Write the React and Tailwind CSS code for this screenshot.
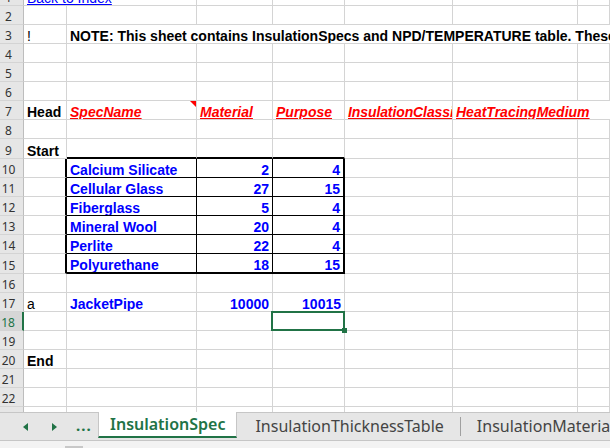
const FONT = { fontFamily: '"Liberation Sans", Arial, sans-serif' };
const UI_FONT = { fontFamily: '"Noto Sans", "Open Sans", sans-serif' };

const GRID = 'grid grid-cols-[24px_43px_130px_76px_72px_108px_125px_1fr]';

const rowHeights = {
  9: 'h-[20px]',
  15: 'h-[20px]',
};

function RowHead({ n, active }) {
  return (
    <div
      className={`flex items-end justify-center pr-[6px] text-[12px] leading-[14px] border-b border-[#d4d4d4] ${
        active
          ? 'bg-[#d6d6d6] text-[#217346] border-r-2 border-r-[#217346]'
          : 'bg-[#e6e6e6] text-[#333] border-r border-r-[#bdbdbd]'
      } ${rowHeights[n] ?? 'h-[19px]'}`}
      style={UI_FONT}
    >
      {n}
    </div>
  );
}

function Cell({ children, className = '', right, span, extra }) {
  return (
    <div
      className={`relative flex items-end overflow-hidden whitespace-nowrap px-[3px] text-[14px] leading-[14px] ${
        right ? 'justify-end' : ''
      } ${span ?? ''} ${className || 'border-r border-b border-[#d4d4d4]'}`}
      style={FONT}
    >
      {children}
      {extra}
    </div>
  );
}

const blank = (k, cls) => <Cell key={k} className={cls} />;

const table = [
  ['Calcium Silicate', 2, 4],
  ['Cellular Glass', 27, 15],
  ['Fiberglass', 5, 4],
  ['Mineral Wool', 20, 4],
  ['Perlite', 22, 4],
  ['Polyurethane', 18, 15],
];

const GRIDLINE = 'border-r border-b border-[#d4d4d4]';

function Row({ n, children }) {
  return (
    <>
      <RowHead n={n} active={n === 18} />
      {children}
    </>
  );
}

function emptyRow(n) {
  return (
    <Row n={n} key={n}>
      {[0, 1, 2, 3, 4, 5, 6].map((i) => blank(i))}
    </Row>
  );
}

export default function App() {
  const hdr = 'font-bold italic underline text-[#ff0000]';
  const blue = 'font-bold text-[#0000ff]';

  return (
    <div className="w-[610px] h-[448px] overflow-hidden bg-white flex flex-col">
      <div className="h-[412px] overflow-hidden shrink-0">
        <div className={`${GRID} -mt-[13px]`}>
          <Row n={1}>
            <Cell span="col-span-2">
              <span className="text-[#0000ff] underline">Back to Index</span>
            </Cell>
            {[0, 1, 2, 3, 4].map((i) => blank(i))}
          </Row>
          {emptyRow(2)}
          <Row n={3}>
            <Cell>!</Cell>
            <Cell span="col-span-6" className="border-b border-[#d4d4d4]">
              <span className="font-bold text-black">
                NOTE: This sheet contains InsulationSpecs and NPD/TEMPERATURE table. These tables are used by the program.
              </span>
            </Cell>
          </Row>
          {emptyRow(4)}
          {emptyRow(5)}
          {emptyRow(6)}
          <Row n={7}>
            <Cell><span className="font-bold">Head</span></Cell>
            <Cell
              extra={
                <span className="absolute top-0 right-0 w-0 h-0 border-l-[6px] border-l-transparent border-t-[6px] border-t-[#ff0000]" />
              }
            >
              <span className={hdr}>SpecName</span>
            </Cell>
            <Cell><span className={hdr}>Material</span></Cell>
            <Cell><span className={hdr}>Purpose</span></Cell>
            <Cell className="border-r border-b border-[#d4d4d4] pr-0">
              <span className={`${hdr} tracking-[-0.1px]`}>InsulationClassification</span>
            </Cell>
            <Cell span="col-span-2" className="border-b border-[#d4d4d4]">
              <span className={hdr}>HeatTracingMedium</span>
            </Cell>
          </Row>
          {emptyRow(8)}
          <Row n={9}>
            <Cell><span className="font-bold">Start</span></Cell>
            <Cell className="border-r border-r-[#d4d4d4] border-b-2 border-b-black" />
            <Cell className="border-r border-r-[#d4d4d4] border-b-2 border-b-black" />
            <Cell className="border-r border-r-[#d4d4d4] border-b-2 border-b-black" />
            {[0, 1, 2].map((i) => blank(i))}
          </Row>
          {table.map(([name, mat, pur], i) => {
            const n = 10 + i;
            const last = i === table.length - 1;
            const bb = last ? 'border-b-2 border-b-black' : 'border-b border-b-black';
            return (
              <Row n={n} key={n}>
                <Cell className="border-r-2 border-r-black border-b border-b-[#d4d4d4]" />
                <Cell className={`border-r border-r-black ${bb}`}>
                  <span className={blue}>{name}</span>
                </Cell>
                <Cell right className={`border-r border-r-black ${bb}`}>
                  <span className={blue}>{mat}</span>
                </Cell>
                <Cell right className={`border-r-2 border-r-black ${bb}`}>
                  <span className={blue}>{pur}</span>
                </Cell>
                {[0, 1, 2].map((j) => blank(j))}
              </Row>
            );
          })}
          {emptyRow(16)}
          <Row n={17}>
            <Cell>a</Cell>
            <Cell><span className={blue}>JacketPipe</span></Cell>
            <Cell right><span className={blue}>10000</span></Cell>
            <Cell right><span className={blue}>10015</span></Cell>
            {[0, 1, 2].map((i) => blank(i))}
          </Row>
          <Row n={18}>
            {blank(0)}
            {blank(1)}
            {blank(2)}
            <div className={`relative z-10 ${GRIDLINE}`}>
              <span className="absolute -left-[2px] -top-[1px] -right-[1px] -bottom-[1px] border-2 border-[#217346]" />
              <span className="absolute -right-[3px] -bottom-[3px] w-[5px] h-[5px] bg-[#217346]" />
            </div>
            {blank(4)}
            {blank(5)}
            {blank(6)}
          </Row>
          {emptyRow(19)}
          <Row n={20}>
            <Cell><span className="font-bold">End</span></Cell>
            {[0, 1, 2, 3, 4, 5].map((i) => blank(i))}
          </Row>
          {emptyRow(21)}
          {emptyRow(22)}
          {emptyRow(23)}
        </div>
      </div>

      <div
        className="h-[29px] shrink-0 flex items-stretch bg-[#e6e6e6] border-t border-b border-[#c6c6c6]"
        style={UI_FONT}
      >
        <div className="w-[98px] shrink-0 flex items-center text-[#217346]">
          <span className="ml-[23px] w-0 h-0 border-y-[4px] border-y-transparent border-r-[5px] border-r-[#217346]" />
          <span className="ml-[24px] w-0 h-0 border-y-[4px] border-y-transparent border-l-[5px] border-l-[#217346]" />
          <span className="ml-[19px] text-[15px] font-bold tracking-[1px] leading-none pb-[2px]">...</span>
        </div>
        <div className="-mt-px h-[26px] shrink-0 px-[11px] flex items-center bg-white border-x border-[#c6c6c6] border-b-2 border-b-[#217346] text-[16px] font-semibold text-[#217346]">
          InsulationSpec
        </div>
        <div className="flex items-center pl-[18px] text-[16px] text-[#444] whitespace-nowrap h-[26px]">
          InsulationThicknessTable
          <span className="mx-[16px] h-[19px] w-px bg-[#a0a0a0]" />
          InsulationMaterials
        </div>
      </div>
      <div className="flex-1 bg-[#f3f3f3] relative">
        <span className="absolute left-[65px] top-[5px] w-[18px] h-[3px] bg-[#c8c8c8]" />
      </div>
    </div>
  );
}
